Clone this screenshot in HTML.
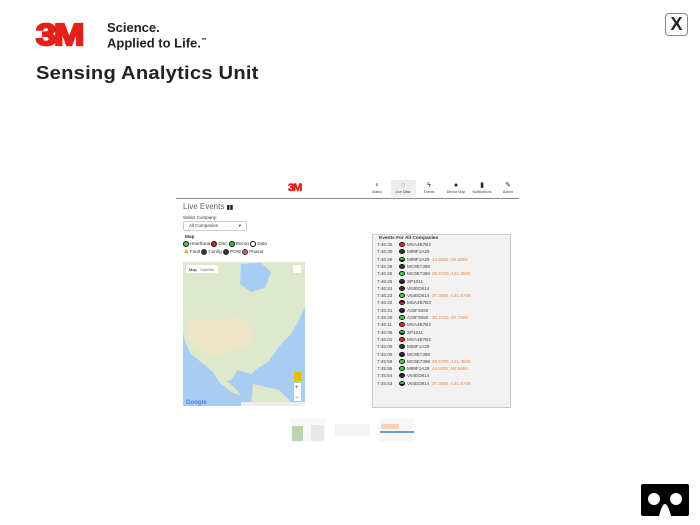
<!DOCTYPE html>
<html><head><meta charset="utf-8">
<style>
*{margin:0;padding:0;box-sizing:border-box}
body{width:700px;height:525px;background:#fff;position:relative;overflow:hidden;font-family:"Liberation Sans",sans-serif;color:#333}
.a{position:absolute}
.logo{left:36px;top:19px;font:bold 31px/31px "Liberation Sans",sans-serif;color:#e4201b;letter-spacing:-2px;transform:scaleX(1.18);transform-origin:left;-webkit-text-stroke:2.2px #e4201b}
.tag{left:107px;top:21px;font:bold 13px/13.5px "Liberation Sans",sans-serif;color:#222}
.title{left:36px;top:63px;font:bold 18px "Liberation Sans",sans-serif;color:#222;letter-spacing:0.2px;transform:scaleX(1.12);transform-origin:left}
.xbtn{left:665px;top:13px;width:23px;height:23px;border:1.5px solid #888;border-radius:4px;font:bold 18px/20px "Liberation Sans";text-align:center;color:#222}
.nav{top:182px;font-size:3.5px;color:#444;text-align:center;width:26px}
.nav i{display:block;height:8px;font-style:normal;font-size:7px;line-height:8px;color:#222}
.row{position:absolute;left:377px;font-size:4.6px;color:#444;height:7px;line-height:7px}
.row .t{position:absolute;left:0}
.row .d{position:absolute;left:22px;top:1px;width:6px;height:5px;border-radius:50%;background:#222}
.row .id{position:absolute;left:30px}
.row .c{position:absolute;left:55px;color:#f0843c;white-space:nowrap}
.lg{font-size:4.6px;color:#333}
.dot{display:inline-block;width:6px;height:6px;border-radius:50%;vertical-align:middle;margin-right:1px}
</style></head><body>
<div class="a logo">3M</div>
<div class="a tag">Science.<br>Applied to Life.<sup style="font-size:6px">™</sup></div>
<div class="a title">Sensing Analytics Unit</div>
<div class="a xbtn">X</div>

<div class="a" style="left:288px;top:182px;font:bold 11px 'Liberation Sans';color:#e4201b;letter-spacing:-1px;-webkit-text-stroke:0.6px #e4201b">3M</div>
<div class="a" style="left:391px;top:180px;width:25px;height:17px;background:#eee"></div>
<div class="a nav" style="left:364px"><i>♀</i>Status</div>
<div class="a nav" style="left:390px"><i>◌</i>Live Data</div>
<div class="a nav" style="left:416px"><i>ϟ</i>Events</div>
<div class="a nav" style="left:443px"><i>●</i>Device Map</div>
<div class="a nav" style="left:469px"><i>▮</i>Notifications</div>
<div class="a nav" style="left:495px"><i>✎</i>Admin</div>
<div class="a" style="left:176px;top:198px;width:343px;height:1px;background:#888"></div>

<div class="a" style="left:183px;top:202px;font-size:8px;color:#666">Live Events <b style="color:#222;font-size:6px">▮▮</b></div>
<div class="a" style="left:183px;top:215px;font-size:4.5px;color:#333">Select Company:</div>
<div class="a" style="left:183px;top:221px;width:64px;height:10px;border:1px solid #ccc;border-radius:2px;font-size:4.5px;line-height:8px;padding-left:5px">All Companies<span style="position:absolute;right:5px">▾</span></div>
<div class="a" style="left:185px;top:235px;font:bold 4.8px 'Liberation Sans'">Map</div>
<div class="a lg" style="left:183px;top:241px"><span class="dot" style="background:#5c5;border:1px solid #111"></span>Heartbeat <span class="dot" style="background:#d22;border:1px solid #111"></span>Disc <span class="dot" style="background:#2c2;border:1px solid #111"></span>Recon <span class="dot" style="border:1px solid #111"></span>Data</div>
<div class="a lg" style="left:183px;top:248px"><span style="color:#d9b100;font-size:7px">▲</span>Fault <span class="dot" style="background:#333"></span>Config <span class="dot" style="background:#333"></span>POW <span class="dot" style="background:#c66;border:1px solid #333"></span>Phasor</div>

<svg class="a" style="left:183px;top:262px" width="122" height="144" viewBox="0 0 122 144">
<rect width="122" height="144" fill="#a9cdf2"/>
<path d="M0 0H122V45L115 60L108 72L100 80L92 90L85 100L75 106L68 112L55 108L48 118L40 120L30 110L18 100L8 92L2 80L0 70Z" fill="#dde8cc"/>
<path d="M58 2L78 1L88 10L82 26L68 30L57 22Z" fill="#a9cdf2"/>
<path d="M5 58L60 56L72 68L64 84L48 88L36 96L22 90L10 82L5 72Z" fill="#efe5c8"/>
<path d="M30 110L42 118L52 126L58 134L48 130L36 120Z" fill="#dde8cc"/>
<path d="M70 122L96 128L108 140L122 143V144H68Z" fill="#dde8cc"/>
<path d="M40 96L45 114L52 110L48 96Z" fill="#dde8cc"/>
<rect x="3" y="3" width="32" height="8" fill="#fff"/>
<text x="6" y="9" font-size="4" font-family="Liberation Sans" fill="#000">Map</text>
<text x="17" y="9" font-size="4" font-family="Liberation Sans" fill="#777">Satellite</text>
<rect x="110" y="3" width="8" height="8" fill="#fff"/>
<rect x="111" y="110" width="7" height="9" fill="#f5b400"/>
<rect x="111" y="121" width="7" height="18" fill="#fff"/>
<text x="112" y="127" font-size="6" fill="#444">+</text>
<text x="112" y="137" font-size="6" fill="#444">−</text>
<text x="3" y="142" font-size="6" font-weight="bold" font-family="Liberation Sans" fill="#4a7fe0">Google</text>
<rect x="58" y="140" width="64" height="4" fill="#eee"/>
</svg>

<div class="a" style="left:372px;top:234px;width:139px;height:174px;background:#f2f2f2;border:1px solid #ccc"></div>
<div class="a" style="left:379px;top:236px;font:bold 4.8px 'Liberation Sans';color:#333">Events For All Companies</div>
<div id="rows"></div>
<script>
var d=[["7:46:32","r","MSA4B7B3",""],["7:46:30","k","M89F1A29",""],["7:46:29","g","M89F1A29","44.5002,-92.5691"],["7:46:28","k","MC9E7398",""],["7:46:26","g","MC9E7398","36.5700,-121.4500"],["7:46:25","k","SP1011",""],["7:46:24","k","V64ED814",""],["7:46:23","g","V64ED814","37.3854,-121.5749"],["7:46:22","r","MSA4B7B3",""],["7:46:21","k","A33F3550",""],["7:46:20","g","A33F3550","30.2100,-97.7000"],["7:46:11","r","MSA4B7B3",""],["7:46:05","g","SP1011",""],["7:46:01","r","MSA4B7B3",""],["7:46:00","k","M89F1A29",""],["7:46:00","k","MC9E7398",""],["7:45:59","g","MC9E7398","36.5700,-121.4500"],["7:45:55","g","M89F1A29","44.5002,-92.5691"],["7:45:54","k","V64ED814",""],["7:45:53","g","V64ED814","37.3854,-121.5749"]];
var c={r:"#d22",k:"#333",g:"#4c4"},h="";
d.forEach(function(e,i){h+='<div class="row" style="top:'+(241+i*7.3)+'px"><span class="t">'+e[0]+'</span><span class="d" style="background:#111"><span style="position:absolute;left:1.3px;top:1.2px;width:3.4px;height:2.6px;border-radius:40%;background:'+c[e[1]]+'"></span></span><span class="id">'+e[2]+'</span><span class="c">'+e[3]+'</span></div>'});
document.getElementById("rows").innerHTML=h;
</script>

<div class="a" style="left:291px;top:419px;width:34px;height:23px;background:#f7f7f7"></div>
<div class="a" style="left:292px;top:426px;width:11px;height:15px;background:#b9d6b0"></div>
<div class="a" style="left:311px;top:425px;width:13px;height:16px;background:#e8e8e8"></div>
<div class="a" style="left:335px;top:424px;width:35px;height:12px;background:#f4f4f4"></div>
<div class="a" style="left:380px;top:419px;width:34px;height:23px;background:#f7f7f7"></div>
<div class="a" style="left:381px;top:424px;width:18px;height:5px;background:#f7d2b4"></div>
<div class="a" style="left:380px;top:431px;width:34px;height:2px;background:#6a9fd6"></div>

<svg class="a" style="left:641px;top:484px" width="48" height="32" viewBox="0 0 48 32">
<path d="M2 0H46A2 2 0 0 1 48 2V30A2 2 0 0 1 46 32H30C28 24 26 20 24 20C22 20 20 24 18 32H2A2 2 0 0 1 0 30V2A2 2 0 0 1 2 0Z" fill="#000"/>
<circle cx="13" cy="15" r="6" fill="#fff"/><circle cx="35" cy="15" r="6" fill="#fff"/>
</svg>
</body></html>
